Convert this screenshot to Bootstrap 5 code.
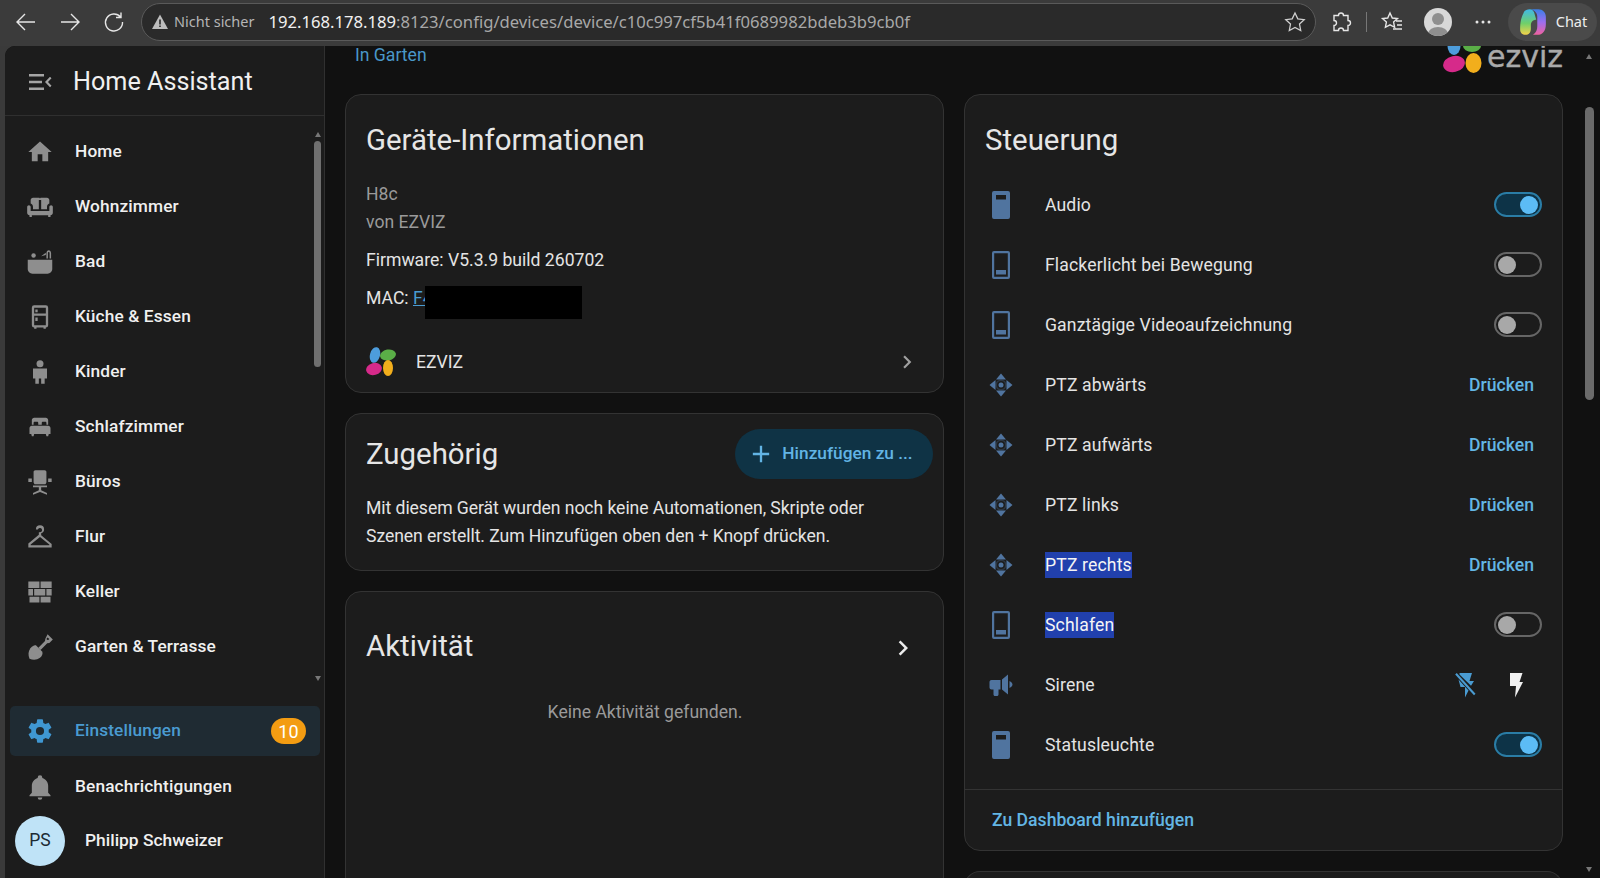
<!DOCTYPE html>
<html lang="de">
<head>
<meta charset="UTF-8">
<title>H8c - Home Assistant</title>
<link href="https://cdn.jsdelivr.net/npm/bootstrap@5.3.0/dist/css/bootstrap.min.css" rel="stylesheet">
<style>
    html, body { height: 100%; }
    body { background: #3a3a3a; font-family: Roboto, sans-serif; color: #e4e4e4; font-size: 17.6px; }
    svg { display: block; flex: none; }

    /* browser toolbar */
    .chrome-bar { height: 46px; padding: 3px 0 5px 0; flex: none; background: #3b3b3b; }
    .chrome-btn { width: 44px; color: #e6e6e6; }
    .addr-bar { width: 1175px; margin-left: 5px; height: 38px; background: #2a2a2a; border: 1px solid #5a5a5a; border-radius: 19px; padding: 0 8px 0 9px; font-family: "Noto Sans", sans-serif; font-size: 16.65px; color: #a8a8a8; white-space: nowrap; }
    .addr-warn { font-size: 14.5px; color: #b5b5b5; margin: 0 14px 0 5px; }
    .addr-host { color: #f0f0f0; }
    .tool-sep { width: 1px; height: 20px; background: #777; margin: 0 13px; }
    .tool-ext { margin-left: 13px; }
    .tool-avatar { margin-left: 20px; }
    .tool-dots { margin-left: 19px; }
    .chat-pill { width: 89px; height: 38px; margin-left: 13px; border-radius: 19px; background: #4a4a4a; font-family: "Noto Sans", sans-serif; font-size: 14.5px; color: #eee; }
    .avatar-mini { width: 28px; height: 28px; border-radius: 50%; background: #d8d8d8; overflow: hidden; }

    /* frame */
    .ha-frame { min-height: 0; margin-left: 5px; background: #111; border-radius: 10px 0 0 0; overflow: hidden; }
    .ha-side { width: 320px; flex: none; background: #1c1c1c; border-right: 1px solid #303030; position: relative; }
    .side-head { height: 70px; padding-top: 3px; border-bottom: 1px solid #2f2f2f; padding-left: 22px; gap: 20px; font-size: 25.2px; color: #f0f0f0; }
    .side-list { padding-top: 8px; height: 590px; }
    .side-item { height: 55px; gap: 21px; padding-left: 21px; font-weight: 500; font-size: 17.3px; letter-spacing: .12px; color: #f0f0f0; }
    .side-item svg { width: 28px; height: 28px; fill: #8e8e8e; }
    .side-active { height: 50px; margin: 0 4px 3px 5px; padding-left: 16px; padding-right: 14px; background: #1f2b33; border-radius: 5px; color: #4a9bd1; }
    .side-active svg { fill: #3f97d2; }
    .side-count { margin-left: auto; width: 35px; height: 26px; border-radius: 13px; background: #f39c12; color: #fff; font-weight: 400; font-size: 18px; }
    .side-user { height: 55px; margin-top: -1px; padding-left: 10px; gap: 20px; font-weight: 500; font-size: 17.4px; color: #f0f0f0; }
    .user-circle { width: 50px; height: 50px; border-radius: 50%; background: #bfe3f7; color: #1c2a33; font-size: 17.5px; font-weight: 400; }
    .side-track { position: absolute; right: 3px; top: 95px; width: 7px; height: 226px; background: #6f6f6f; border-radius: 4px; }
    .side-arrow { position: absolute; right: 3px; width: 0; height: 0; border-left: 3.5px solid transparent; border-right: 3.5px solid transparent; }

    /* main */
    .ha-main { position: relative; padding: 0 37px 0 20px; min-width: 0; }
    .top-strip { height: 48px; padding-left: 10px; color: #4a97c8; }
    .strip-area { line-height: 18px; }
    .brand-wrap { gap: 5px; height: 30px; }
    .brand-word { font-family: "DejaVu Sans", sans-serif; font-size: 30px; line-height: 21px; color: #aaa; -webkit-text-stroke: .4px #aaa; }
    .ha-cols { gap: 20px; }
    .ha-col { width: 599px; gap: 20px; }
    .ha-card { background: #1c1c1c; border: 1px solid #333; border-radius: 16px; }
    .ha-title { font-size: 29.4px; line-height: 36px; color: #e6e6e6; }
    .dim-text { color: #9a9a9a; }
    .info-block { height: 299px; padding: 27px 21px 0 20px; }
    .info-head { margin-bottom: 22px; }
    .info-line { line-height: 28px; }
    .info-fw { margin-top: 10px; }
    .mac-link { color: #4a9bd1; text-decoration: underline; }
    .mac-hide { position: relative; top: 4px; width: 157px; height: 33px; background: #000; margin-left: -8px; }
    .brand-row { margin-top: 32px; gap: 20px; }
    .chev-grey { margin-left: auto; margin-right: 2px; fill: #a0a0a0; }
    .rel-block { height: 158px; padding: 15px 10px 0 20px; }
    .add-pill { width: 198px; height: 50px; padding: 0 8px 0 0; border-radius: 25px; background: #0f3345; color: #62b4e4; font-weight: 500; font-size: 17.3px; gap: 7px; }
    .rel-text { line-height: 28px; margin-top: 15px; padding-right: 30px; letter-spacing: -.06px; }
    .act-block { height: 340px; padding: 36px 19px 0 20px; }
    .act-chev { margin-right: 6px; margin-top: 4px; }
    .empty-text { margin-top: 35px; text-align: center; }
    .ctrl-block { height: 757px; }
    .ctrl-head { height: 80px; padding: 27px 21px 0 20px; }
    .ctrl-row { height: 60px; padding: 0 20px 0 24px; gap: 32px; letter-spacing: .14px; }
    .ctrl-row svg.ent { width: 24px; height: 28px; fill: #50749f; }
    .press-link { margin-left: auto; margin-right: 8px; color: #63b6e4; font-weight: 500; letter-spacing: 0; }
    .sel-text { background: #2140ad; color: #f5f5f5; padding: 0; line-height: 26px; }
    .ha-switch { margin-left: auto; margin-bottom: 1px; width: 48px; height: 25px; border: 2px solid #666; border-radius: 13px; padding: 0 2px; }
    .ha-switch i { display: block; width: 18px; height: 18px; border-radius: 50%; background: #a8a8a8; }
    .switch-on { background: #0d3347; border-color: #2a7da6; justify-content: flex-end; }
    .switch-on i { background: #5cbcf5; }
    .flash-off { margin-left: auto; margin-right: 1px; }
    .flash-on { margin-right: 19px; }
    .ctrl-foot { margin-top: 14px; border-top: 1px solid #333; height: 61px; padding-left: 27px; color: #63b6e4; font-weight: 500; }
    .next-card { height: 30px; border-bottom: 0; border-radius: 16px 16px 0 0; }
    .main-track { position: absolute; right: 6px; top: 61px; width: 9px; height: 293px; background: #6b6b6b; border-radius: 5px; }
    .main-arrow { right: 8px; }
</style>
</head>
<body class="d-flex flex-column overflow-hidden">

<svg width="0" height="0" class="position-absolute">
    <defs>
        <symbol id="i-phone-on" viewBox="0 0 18 28"><path fill-rule="evenodd" d="M2 0h14a2 2 0 0 1 2 2v24a2 2 0 0 1-2 2H2a2 2 0 0 1-2-2V2a2 2 0 0 1 2-2zM4 4v4.500h10V4z"/></symbol>
        <symbol id="i-phone-off" viewBox="0 0 18 28"><path fill-rule="evenodd" d="M2 0h14a2 2 0 0 1 2 2v24a2 2 0 0 1-2 2H2a2 2 0 0 1-2-2V2a2 2 0 0 1 2-2zM2.200 2.200v23.600h13.600V2.200zM4 19h10v4.500H4z"/></symbol>
        <symbol id="i-pan" viewBox="0 0 24 24"><path d="M12 .5 7 6.500h10zM12 23.500 17 17.500H7zM.5 12 6.500 17V7zM23.500 12 17.500 7v10z"/><path fill-rule="evenodd" d="M12 6.500a5.500 5.500 0 1 1 0 11 5.500 5.500 0 0 1 0-11zM12 8a4 4 0 1 0 0 8 4 4 0 0 0 0-8z" opacity=".3"/><circle cx="12" cy="12" r="2.500"/></symbol>
    </defs>
</svg>

<header class="chrome-bar d-flex align-items-center">
    <div class="chrome-btn d-flex justify-content-center ms-1"><svg width="24" height="24" viewBox="0 0 24 24" fill="none" stroke="currentColor" stroke-width="1.400"><path d="M21 12H3M11 4l-8 8 8 8"/></svg></div>
    <div class="chrome-btn d-flex justify-content-center"><svg width="24" height="24" viewBox="0 0 24 24" fill="none" stroke="currentColor" stroke-width="1.400"><path d="M3 12h18M13 4l8 8-8 8"/></svg></div>
    <div class="chrome-btn d-flex justify-content-center"><svg width="24" height="24" viewBox="0 0 24 24" fill="none" stroke="currentColor" stroke-width="1.400"><path d="M18.500 7A8.500 8.500 0 1 0 20.500 12M19 2.500V7.500H14"/></svg></div>
    <div class="addr-bar d-flex align-items-center">
        <svg width="18" height="18" viewBox="0 0 18 18"><path fill="#bdbdbd" d="M9 1.500 17 16H1z"/><path fill="#2a2a2a" d="M8.200 6.500h1.600v5H8.200zM8.200 12.500h1.600v1.600H8.200z"/></svg>
        <span class="addr-warn">Nicht sicher</span>
        <span><span class="addr-host">192.168.178.189</span>:8123/config/devices/device/c10c997cf5b41f0689982bdeb3b9cb0f</span>
        <svg width="24" height="24" viewBox="0 0 24 24" class="ms-auto" fill="none" stroke="#cfcfcf" stroke-width="1.300"><path d="m12 3 2.800 5.900 6.400.8-4.700 4.400 1.200 6.400-5.700-3.100-5.700 3.100 1.200-6.400-4.700-4.400 6.400-.8z"/></svg>
    </div>
    <div class="d-flex align-items-center">
        <svg class="tool-ext" width="24" height="24" viewBox="0 0 24 24" fill="none" stroke="#e6e6e6" stroke-width="1.400"><path d="M9.500 5.500a2.500 2.500 0 0 1 5 0H19v5a2.500 2.500 0 0 1 0 5v5H14.500a2.500 2.500 0 0 0-5 0H5v-5a2.500 2.500 0 0 0 0-5v-5z"/></svg>
        <span class="tool-sep"></span>
        <svg width="24" height="24" viewBox="0 0 24 24" fill="none" stroke="#e6e6e6" stroke-width="1.400"><path d="m10 3 2.300 5 5.200.6-3.900 3.500 1 5.200L10 14.800l-4.600 2.500 1-5.200L2.500 8.600 7.700 8zM16 11h6M17 15h5M13 19h9"/></svg>
        <div class="avatar-mini tool-avatar"><svg width="28" height="28" viewBox="0 0 28 28"><circle cx="14" cy="11" r="6" fill="#8f8f8f"/><ellipse cx="14" cy="26" rx="10" ry="7" fill="#8f8f8f"/></svg></div>
        <svg class="tool-dots" width="24" height="24" viewBox="0 0 24 24" fill="#e6e6e6"><circle cx="6" cy="12" r="1.500"/><circle cx="12" cy="12" r="1.500"/><circle cx="18" cy="12" r="1.500"/></svg>
    </div>
    <div class="chat-pill d-flex align-items-center justify-content-center gap-2">
        <svg width="30" height="30" viewBox="0 0 28 28">
            <defs>
                <linearGradient id="cp-a" x1="0" y1="0" x2="0" y2="1"><stop offset="0" stop-color="#3fb8e8"/><stop offset=".55" stop-color="#6fd06a"/><stop offset="1" stop-color="#f6d34a"/></linearGradient>
                <linearGradient id="cp-b" x1="0" y1="0" x2="0" y2="1"><stop offset="0" stop-color="#3a7fe6"/><stop offset=".5" stop-color="#9b6ef0"/><stop offset="1" stop-color="#f0629f"/></linearGradient>
            </defs>
            <path fill="url(#cp-b)" d="M12 2h7c4 0 7 3 7 7v7c0 6-3 10-8 10h-4c3-2 4-5 4-8V9c0-3-2-6-6-7z"/>
            <path fill="url(#cp-a)" d="M11 2c2 0 3 1 4 3l2 7c-3 0-5 2-5 5v3c0 4-2 6-5 6-3 0-5-2-5-5 0-7 1-11 3-15 1-3 3-4 6-4z"/>
        </svg>
        <span>Chat</span>
    </div>
</header>

<div class="ha-frame d-flex flex-grow-1">
    <aside class="ha-side d-flex flex-column">
        <div class="side-head d-flex align-items-center">
            <svg width="26" height="26" viewBox="0 0 26 26" fill="#a5a5a5"><path d="M2 5h15v2.400H2zM2 11.800h13v2.400H2zM2 18.600h15V21H2zM24.500 9.200 21 13l3.500 3.800-1.500 1.500-5-5.300 5-5.300z"/></svg>
            <span>Home Assistant</span>
        </div>
        <nav class="side-list d-flex flex-column">
            <div class="side-item d-flex align-items-center"><svg viewBox="0 0 24 24"><path d="M10 20v-6h4v6h5v-8h3L12 3 2 12h3v8z"/></svg><span>Home</span></div>
            <div class="side-item d-flex align-items-center"><svg viewBox="0 0 24 24"><path d="M6 4h5c.6 0 1 .4 1 1 0-.6.4-1 1-1h5c1.100 0 2 .9 2 2v3.100c-1.200.4-2 1.500-2 2.900v2H13V6h-2v8H6v-2c0-1.400-.8-2.500-2-2.900V6c0-1.100.9-2 2-2zM2.500 10.500c.8 0 1.500.7 1.500 1.500v3.500h16V12c0-.8.700-1.500 1.500-1.500s1.500.7 1.500 1.500v5c0 1.100-.9 2-2 2v1.500h-2V19H5v1.500H3V19c-1.100 0-2-.9-2-2v-5c0-.8.7-1.500 1.500-1.500z"/></svg><span>Wohnzimmer</span></div>
            <div class="side-item d-flex align-items-center"><svg viewBox="0 0 24 24"><circle cx="6.500" cy="6.500" r="1.900"/><path d="M1.500 10h21v8c0 2.200-1.800 4-4 4h-13c-2.200 0-4-1.800-4-4zM17.500 9V4.500C17.500 3 18.500 2 19.500 2s2 1 2 2.500V9h-1.300V4.500c0-.6-.3-1-.7-1s-.7.4-.7 1V9zM13 7l4-3v2z"/></svg><span>Bad</span></div>
            <div class="side-item d-flex align-items-center"><svg viewBox="0 0 24 24"><path fill-rule="evenodd" d="M7 2h10a2 2 0 0 1 2 2v15a2 2 0 0 1-2 2v1h-2v-1H9v1H7v-1a2 2 0 0 1-2-2V4a2 2 0 0 1 2-2zM7 4v5h10V4zm0 7v8h10v-8zM8 5.500h2v2.500H8zM8 12.500h2v3H8z"/></svg><span>Küche &amp; Essen</span></div>
            <div class="side-item d-flex align-items-center"><svg viewBox="0 0 24 24"><circle cx="12" cy="5" r="3"/><path d="M6 9h12v8.500h-2V22h-3v-4.500h-2V22H8v-4.500H6z"/></svg><span>Kinder</span></div>
            <div class="side-item d-flex align-items-center"><svg viewBox="0 0 24 24"><path d="M7 4h10c1.100 0 2 .9 2 2v4h-1.500V8.500c0-.6-.4-1-1-1h-2c-.6 0-1 .4-1 1V10h-3V8.500c0-.6-.4-1-1-1h-2c-.6 0-1 .4-1 1V10H5V6c0-1.100.9-2 2-2zM5 11h14c1.100 0 2 .9 2 2v5h-1.500l-.5 2h-1.500l-.5-2H7l-.5 2H5l-.5-2H3v-5c0-1.100.9-2 2-2z"/></svg><span>Schlafzimmer</span></div>
            <div class="side-item d-flex align-items-center"><svg viewBox="0 0 24 24"><path d="M8 2h8c.9 0 1.500.6 1.500 1.500V12c0 1-.6 2-1.500 2H8c-.9 0-1.500-1-1.500-2V3.500C6.500 2.600 7.100 2 8 2zM2 9h3v3H2zM19 9h3v3h-3zM6 15h12v1.500h-5V19l5 2.500V23l-6-2.500L6 23v-1.500l5-2.500v-2.500H6z"/></svg><span>Büros</span></div>
            <div class="side-item d-flex align-items-center"><svg viewBox="0 0 24 24"><path fill-rule="evenodd" d="M12 2a3.500 3.500 0 0 1 3.500 3.500c0 1.500-.9 2.500-2 3l-.5.300v1.700l9 7.500V21H2v-3.500l9-7.500V8h1a1.900 1.900 0 1 0-1.900-2.500H8.500A3.500 3.500 0 0 1 12 2zM12 12l-8 6.500v.5h16v-.5z"/></svg><span>Flur</span></div>
            <div class="side-item d-flex align-items-center"><svg viewBox="0 0 24 24"><path d="M2 3h9.500v5.500H2zM12.500 3H22v5.500h-9.500zM2 9.500h4v5.500H2zM7 9.500h9.500v5.500H7zM17.500 9.500H22v5.500h-4.500zM3 16h8.500v5H3zM12.500 16H21v5h-8.500z"/></svg><span>Keller</span></div>
            <div class="side-item d-flex align-items-center"><svg viewBox="0 0 24 24"><path fill-rule="evenodd" d="M18.500 1 23 5.500l-3 3-1.800.3-5.700 5.700-1.900-1.900 5.700-5.700.3-1.900zM18.500 3.900l-.8.8.1 1 1.300.3.900-.8z"/><path d="M8.500 10.500l5.500 5.500c.6 2-.4 3.800-2 5.200-2.600 2-6 2.100-9 .8-1.300-3-1.200-6.400.8-9 1.400-1.600 3-2.900 4.700-2.500z"/></svg><span>Garten &amp; Terrasse</span></div>
        </nav>
        <div class="side-item side-active d-flex align-items-center"><svg viewBox="0 0 24 24"><path d="M12 15.500A3.500 3.500 0 0 1 8.500 12 3.500 3.500 0 0 1 12 8.500a3.500 3.500 0 0 1 3.500 3.500 3.500 3.500 0 0 1-3.500 3.500m7.430-2.530c.04-.32.07-.64.07-.97 0-.33-.03-.66-.07-1l2.110-1.630c.19-.15.24-.42.12-.64l-2-3.460c-.12-.22-.39-.31-.61-.22l-2.490 1c-.52-.39-1.060-.73-1.690-.98l-.37-2.650A.506.506 0 0 0 14 2h-4c-.25 0-.46.18-.5.420l-.37 2.650c-.63.25-1.170.59-1.690.98l-2.490-1c-.22-.09-.49 0-.61.22l-2 3.460c-.13.22-.07.49.12.64L4.570 11c-.04.34-.07.67-.07 1 0 .33.03.65.07.97l-2.110 1.660c-.19.15-.25.42-.12.64l2 3.460c.12.22.39.3.61.22l2.490-1.010c.52.4 1.060.74 1.690.99l.37 2.650c.04.24.25.42.5.42h4c.25 0 .46-.18.5-.42l.37-2.650c.63-.26 1.170-.59 1.690-.99l2.490 1.010c.22.08.49 0 .61-.22l2-3.460c.12-.22.07-.49-.12-.64z"/></svg><span>Einstellungen</span><span class="side-count d-flex align-items-center justify-content-center">10</span></div>
        <div class="side-item d-flex align-items-center"><svg viewBox="0 0 24 24"><path d="M21 19v1H3v-1l2-2v-6c0-3.100 2.030-5.830 5-6.710V4a2 2 0 0 1 2-2 2 2 0 0 1 2 2v.29c2.970.88 5 3.610 5 6.710v6zm-7 2a2 2 0 0 1-2 2 2 2 0 0 1-2-2"/></svg><span>Benachrichtigungen</span></div>
        <div class="side-user d-flex align-items-center"><span class="user-circle d-flex align-items-center justify-content-center">PS</span><span>Philipp Schweizer</span></div>
        <span class="side-track"></span>
        <span class="side-arrow" style="top:86px;border-bottom:5px solid #777"></span>
        <span class="side-arrow" style="top:630px;border-top:5px solid #777"></span>
    </aside>

    <main class="ha-main flex-grow-1 overflow-hidden">
        <div class="top-strip d-flex justify-content-between">
            <span class="strip-area">In Garten</span>
            <div class="brand-wrap d-flex align-items-start">
                <svg width="39" height="28" viewBox="0 0 39 28">
                    <ellipse cx="11" cy="0" rx="6.500" ry="9" fill="#4d9ddc"/>
                    <ellipse cx="29" cy="0" rx="9" ry="6" fill="#5aae47"/>
                    <ellipse cx="11" cy="18" rx="11" ry="8" fill="#d62a8a" transform="rotate(-12 11 18)"/>
                    <ellipse cx="30.500" cy="17" rx="8" ry="10" fill="#f2ae1c"/>
                </svg>
                <span class="brand-word">ezviz</span>
            </div>
        </div>
        <div class="ha-cols d-flex">
            <div class="ha-col d-flex flex-column">
                <section class="ha-card info-block">
                    <div class="ha-title info-head">Geräte-Informationen</div>
                    <div class="info-line dim-text">H8c</div>
                    <div class="info-line dim-text">von EZVIZ</div>
                    <div class="info-line info-fw">Firmware: V5.3.9 build 260702</div>
                    <div class="d-flex align-items-center mt-2">MAC:&nbsp;<span class="mac-link">F4</span><span class="mac-hide"></span></div>
                    <div class="brand-row d-flex align-items-center">
                        <svg width="30" height="30" viewBox="0 0 30 30">
                            <ellipse cx="9" cy="8" rx="5" ry="8" fill="#4d9ddc" transform="rotate(15 9 8)"/>
                            <ellipse cx="22" cy="8" rx="8" ry="5.500" fill="#5aae47" transform="rotate(-10 22 8)"/>
                            <ellipse cx="8" cy="22" rx="8" ry="6" fill="#d62a8a" transform="rotate(-15 8 22)"/>
                            <ellipse cx="22" cy="21" rx="5" ry="8" fill="#f2ae1c"/>
                        </svg>
                        <span>EZVIZ</span>
                        <svg class="chev-grey" width="26" height="26" viewBox="0 0 24 24"><path d="M8.590 16.580 13.170 12 8.590 7.410 10 6l6 6-6 6z"/></svg>
                    </div>
                </section>
                <section class="ha-card rel-block">
                    <div class="d-flex justify-content-between align-items-center">
                        <span class="ha-title">Zugehörig</span>
                        <button class="add-pill btn d-flex align-items-center justify-content-center border-0">
                            <svg width="28" height="28" viewBox="0 0 24 24" fill="#62b4e4"><path d="M19 13h-6v6h-2v-6H5v-2h6V5h2v6h6z"/></svg>
                            <span>Hinzufügen zu ...</span>
                        </button>
                    </div>
                    <div class="rel-text">Mit diesem Gerät wurden noch keine Automationen, Skripte oder Szenen erstellt. Zum Hinzufügen oben den + Knopf drücken.</div>
                </section>
                <section class="ha-card act-block">
                    <div class="d-flex align-items-center justify-content-between">
                        <span class="ha-title">Aktivität</span>
                        <svg class="act-chev" width="30" height="30" viewBox="0 0 24 24" fill="#ececec"><path d="M8.590 16.580 13.170 12 8.590 7.410 10 6l6 6-6 6z"/></svg>
                    </div>
                    <div class="empty-text dim-text">Keine Aktivität gefunden.</div>
                </section>
            </div>
            <div class="ha-col d-flex flex-column">
                <section class="ha-card ctrl-block">
                    <div class="ctrl-head ha-title">Steuerung</div>
                    <div class="ctrl-row d-flex align-items-center"><svg class="ent"><use href="#i-phone-on"/></svg><span>Audio</span><span class="ha-switch switch-on d-flex align-items-center"><i></i></span></div>
                    <div class="ctrl-row d-flex align-items-center"><svg class="ent"><use href="#i-phone-off"/></svg><span>Flackerlicht bei Bewegung</span><span class="ha-switch d-flex align-items-center"><i></i></span></div>
                    <div class="ctrl-row d-flex align-items-center"><svg class="ent"><use href="#i-phone-off"/></svg><span>Ganztägige Videoaufzeichnung</span><span class="ha-switch d-flex align-items-center"><i></i></span></div>
                    <div class="ctrl-row d-flex align-items-center"><svg class="ent"><use href="#i-pan"/></svg><span>PTZ abwärts</span><span class="press-link">Drücken</span></div>
                    <div class="ctrl-row d-flex align-items-center"><svg class="ent"><use href="#i-pan"/></svg><span>PTZ aufwärts</span><span class="press-link">Drücken</span></div>
                    <div class="ctrl-row d-flex align-items-center"><svg class="ent"><use href="#i-pan"/></svg><span>PTZ links</span><span class="press-link">Drücken</span></div>
                    <div class="ctrl-row d-flex align-items-center"><svg class="ent"><use href="#i-pan"/></svg><span class="sel-text">PTZ rechts</span><span class="press-link">Drücken</span></div>
                    <div class="ctrl-row d-flex align-items-center"><svg class="ent"><use href="#i-phone-off"/></svg><span class="sel-text">Schlafen</span><span class="ha-switch d-flex align-items-center"><i></i></span></div>
                    <div class="ctrl-row d-flex align-items-center">
                        <svg class="ent" viewBox="0 0 24 24"><path d="M11.500 7v9.500H9.500v5c0 .8-.7 1.500-1.500 1.500H6c-.8 0-1.500-.7-1.500-1.500v-5H2.500c-1.100 0-2-.9-2-2V9c0-1.100.9-2 2-2zM13 6.500 19 1.500v20l-6-5zM20.500 8c1.700.7 3 2 3 3.500s-1.300 2.800-3 3.500z"/></svg>
                        <span>Sirene</span>
                        <svg class="flash-off" width="22" height="26" viewBox="0 0 22 26" fill="#4a9bd1"><path d="M5.500 1h12.500l-2.500 8h4.500l-3 4.800L5.500 2.600zM4.500 7.500l10 11-3.500 7V15H6.500z"/><path d="M1.200 2.500 2.700 1 21.500 21.800 20 23.300z"/></svg>
                        <svg class="flash-on" width="14" height="26" viewBox="0 0 14 26" fill="#f0f0f0"><path d="M1 1h12.500l-3 9H14L6 25.500 7 14H1z"/></svg>
                    </div>
                    <div class="ctrl-row d-flex align-items-center"><svg class="ent"><use href="#i-phone-on"/></svg><span>Statusleuchte</span><span class="ha-switch switch-on d-flex align-items-center"><i></i></span></div>
                    <div class="ctrl-foot d-flex align-items-center">Zu Dashboard hinzufügen</div>
                </section>
                <section class="ha-card next-card"></section>
            </div>
        </div>
        <span class="main-track"></span>
        <span class="side-arrow main-arrow" style="top:8px;border-bottom:5px solid #777"></span>
        <span class="side-arrow main-arrow" style="bottom:6px;border-top:5px solid #777"></span>
    </main>
</div>

<script src="https://cdn.jsdelivr.net/npm/bootstrap@5.3.0/dist/js/bootstrap.bundle.min.js"></script>
</body>
</html>
